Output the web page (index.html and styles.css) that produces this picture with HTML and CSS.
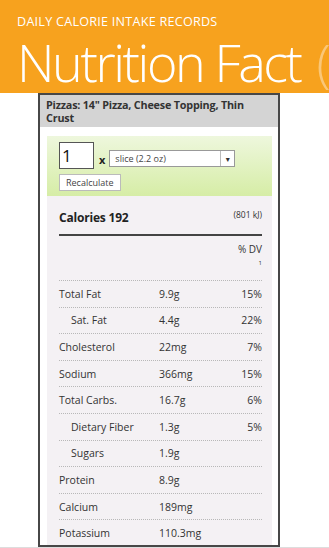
FILE: index.html
```html
<!DOCTYPE html>
<html>
<head>
<meta charset="utf-8">
<link rel="stylesheet" href="styles.css">
</head>
<body>
<div class="app">
  <header class="hdr">
    <div class="sub">DAILY CALORIE INTAKE RECORDS</div>
    <div class="title"><span>Nutrition Fact</span><span class="next">(</span></div>
  </header>
  <div class="card">
    <div class="food">Pizzas: 14" Pizza, Cheese Topping, Thin Crust</div>
    <div class="inner">
      <div class="calc">
        <div class="calc-row">
          <div class="qty">1</div>
          <div class="times">x</div>
          <div class="sel"><span class="sel-text">slice (2.2 oz)</span><span class="sel-arrow">▾</span></div>
        </div>
        <div class="btn">Recalculate</div>
      </div>
      <div class="facts">
        <div class="cal">
          <span class="cal-main">Calories 192</span>
          <span class="kj">(801 kJ)</span>
        </div>
        <div class="dv">
          <div class="dv-t">% DV</div>
          <div class="dv-n">1</div>
        </div>
        <div class="row"><span class="lbl">Total Fat</span><span class="val">9.9g</span><span class="pct">15%</span></div>
        <div class="row"><span class="lbl ind">Sat. Fat</span><span class="val">4.4g</span><span class="pct">22%</span></div>
        <div class="row"><span class="lbl">Cholesterol</span><span class="val">22mg</span><span class="pct">7%</span></div>
        <div class="row"><span class="lbl">Sodium</span><span class="val">366mg</span><span class="pct">15%</span></div>
        <div class="row"><span class="lbl">Total Carbs.</span><span class="val">16.7g</span><span class="pct">6%</span></div>
        <div class="row"><span class="lbl ind">Dietary Fiber</span><span class="val">1.3g</span><span class="pct">5%</span></div>
        <div class="row"><span class="lbl ind">Sugars</span><span class="val">1.9g</span><span class="pct"></span></div>
        <div class="row"><span class="lbl">Protein</span><span class="val">8.9g</span><span class="pct"></span></div>
        <div class="row"><span class="lbl">Calcium</span><span class="val">189mg</span><span class="pct"></span></div>
        <div class="row"><span class="lbl">Potassium</span><span class="val">110.3mg</span><span class="pct"></span></div>
      </div>
    </div>
  </div>
</div>
</body>
</html>
```

FILE: styles.css
```css
html, body { margin: 0; padding: 0; }
body { width: 329px; height: 548px; overflow: hidden; background: #fff; font-family: "Open Sans", "DejaVu Sans", sans-serif; color: #333; }
.app { width: 329px; height: 548px; display: flex; flex-direction: column; border-bottom: 1px solid #ddd; box-sizing: border-box; }
.hdr { height: 93px; background: #f7a21e; color: #fff; padding-left: 17px; box-sizing: border-box; overflow: hidden; flex: none; }
.sub { font-size: 12.6px; font-weight: 400; padding-top: 13px; line-height: 17px; letter-spacing: 0.25px; }
.title { font-size: 52px; font-weight: 300; line-height: 44px; white-space: nowrap; margin-top: 10px; letter-spacing: -2.4px; }
.next { opacity: 0.4; margin-left: 16px; }
.card { margin-left: 38px; width: 242px; flex: 1; border: 2px solid #474747; box-sizing: border-box; overflow: hidden; display: flex; flex-direction: column; }
.food { background: #d4d4d4; font-weight: 700; font-size: 10.8px; line-height: 13px; padding: 3px 24px 3px 6px; color: #333; letter-spacing: -0.2px; }
.inner { padding: 9px 6px 0 7px; flex: 1; display: flex; flex-direction: column; }
.calc { background: linear-gradient(#eef7dd, #d6eda6); padding: 6px 0 5px 12px; }
.calc-row { display: flex; align-items: flex-end; }
.qty { border: 1px solid #555; background: #fff; font-size: 17px; line-height: 25px; padding-left: 2px; box-sizing: border-box; width: 35px; height: 27px; color: #111; }
.times { font-weight: 700; font-size: 11px; margin: 0 4px 2px 5px; color: #222; }
.sel { width: 126px; height: 17px; border: 1px solid #999; background: #fff; box-sizing: border-box; display: flex; font-size: 9px; margin-bottom: 2px; }
.sel-text { flex: 1; padding-left: 5px; line-height: 15px; color: #444; }
.sel-arrow { width: 13px; border-left: 1px solid #bbb; font-size: 8px; text-align: center; line-height: 15px; color: #333; }
.btn { display: inline-block; margin-top: 1px; border: 1px solid #bbb; background: #fff; font-size: 9px; line-height: 15px; padding: 0 6px; color: #444; }
.facts { background: #f4f1f4; flex: 1; padding: 0 10px 0 12px; }
.cal { display: flex; justify-content: space-between; align-items: flex-start; height: 40px; border-bottom: 2px solid #444; box-sizing: border-box; padding-top: 15px; }
.cal-main { font-weight: 700; font-size: 12px; line-height: 14px; color: #222; letter-spacing: -0.2px; }
.kj { font-size: 8.5px; line-height: 10px; margin-top: -1px; }
.dv { height: 44px; text-align: right; padding-top: 7px; box-sizing: border-box; }
.dv-t { font-size: 10px; line-height: 13px; }
.dv-n { font-size: 6px; line-height: 8px; margin-top: 3px; }
.row { display: flex; align-items: center; height: 26.6px; border-top: 1px dotted #b8b8b8; box-sizing: border-box; font-size: 10.5px; }
.lbl { width: 100px; }
.lbl.ind { padding-left: 12px; box-sizing: border-box; }
.val { flex: 1; }
.pct { text-align: right; }
```
